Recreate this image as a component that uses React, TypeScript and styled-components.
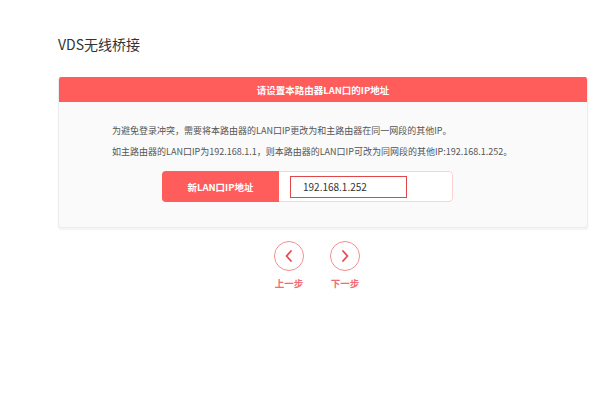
import React from "react";
import styled, { createGlobalStyle } from "styled-components";

const Global = createGlobalStyle`
  html, body { margin: 0; padding: 0; background: #ffffff; }
  body { font-family: "Noto Sans CJK SC", "Noto Sans", sans-serif; }
`;

const Page = styled.div`
  width: 600px;
  height: 419px;
  box-sizing: border-box;
  padding: 36px 0 0 58px;
  overflow: hidden;
`;

const Title = styled.h1`
  margin: 0 0 24px 0;
  font-size: 14px;
  line-height: 17px;
  font-weight: 400;
  color: #333333;
`;

const Card = styled.section`
  width: 528px;
  background: #fafafa;
  border: 1px solid #ececec;
  border-top: none;
  border-radius: 3px;
  box-shadow: 0 2px 2px rgba(0, 0, 0, 0.05);
  overflow: hidden;
`;

const Header = styled.div`
  height: 25px;
  background: #ff5c5c;
  color: #ffffff;
  font-size: 9.5px;
  font-weight: 700;
  display: flex;
  align-items: center;
  justify-content: center;
`;

const Body = styled.div`
  padding: 18px 0 25px 53px;
`;

const Line = styled.p`
  margin: 0;
  font-size: 9px;
  line-height: 21px;
  color: #555555;
  white-space: nowrap;
`;

const Row = styled.div`
  margin: 9px 0 0 50px;
  width: 291px;
  height: 31px;
  box-sizing: border-box;
  border: 1px solid #fbd3d3;
  border-radius: 4px;
  display: flex;
  align-items: center;
  background: #ffffff;
`;

const Label = styled.div`
  width: 117px;
  height: 31px;
  margin: -1px 0 -1px -1px;
  background: #ff5c5c;
  border-radius: 4px 0 0 4px;
  color: #ffffff;
  font-size: 9.5px;
  font-weight: 700;
  display: flex;
  align-items: center;
  justify-content: center;
`;

const Input = styled.div`
  margin-left: 11px;
  width: 117px;
  height: 22px;
  box-sizing: border-box;
  border: 1.5px solid #e0474b;
  padding-left: 12px;
  font-size: 10px;
  color: #333333;
  display: flex;
  align-items: center;
`;

const Nav = styled.div`
  width: 528px;
  margin-top: 13px;
  display: flex;
  justify-content: center;
  gap: 26px;
  padding-right: 10px;
  box-sizing: border-box;
`;

const NavItem = styled.div`
  display: flex;
  flex-direction: column;
  align-items: center;
  gap: 6px;
`;

const Circle = styled.div`
  width: 30px;
  height: 30px;
  box-sizing: border-box;
  border: 1.5px solid #f38d8f;
  border-radius: 50%;
  display: flex;
  align-items: center;
  justify-content: center;
`;

const NavText = styled.span`
  font-size: 9.5px;
  font-weight: 700;
  color: #f26b6d;
  line-height: 12px;
`;

const Chevron = ({ dir }: { dir: "left" | "right" }) => (
  <svg width="12" height="14" viewBox="0 0 12 14">
    <path
      d={dir === "left" ? "M8 2 L3.5 7 L8 12" : "M4 2 L8.5 7 L4 12"}
      fill="none"
      stroke="#e8474f"
      strokeWidth="1.8"
      strokeLinecap="round"
      strokeLinejoin="round"
    />
  </svg>
);

export default function App() {
  return (
    <>
      <Global />
      <Page>
        <Title>VDS无线桥接</Title>
        <Card>
          <Header>请设置本路由器LAN口的IP地址</Header>
          <Body>
            <Line>为避免登录冲突，需要将本路由器的LAN口IP更改为和主路由器在同一网段的其他IP。</Line>
            <Line>如主路由器的LAN口IP为192.168.1.1，则本路由器的LAN口IP可改为同网段的其他IP:192.168.1.252。</Line>
            <Row>
              <Label>新LAN口IP地址</Label>
              <Input>192.168.1.252</Input>
            </Row>
          </Body>
        </Card>
        <Nav>
          <NavItem>
            <Circle>
              <Chevron dir="left" />
            </Circle>
            <NavText>上一步</NavText>
          </NavItem>
          <NavItem>
            <Circle>
              <Chevron dir="right" />
            </Circle>
            <NavText>下一步</NavText>
          </NavItem>
        </Nav>
      </Page>
    </>
  );
}
